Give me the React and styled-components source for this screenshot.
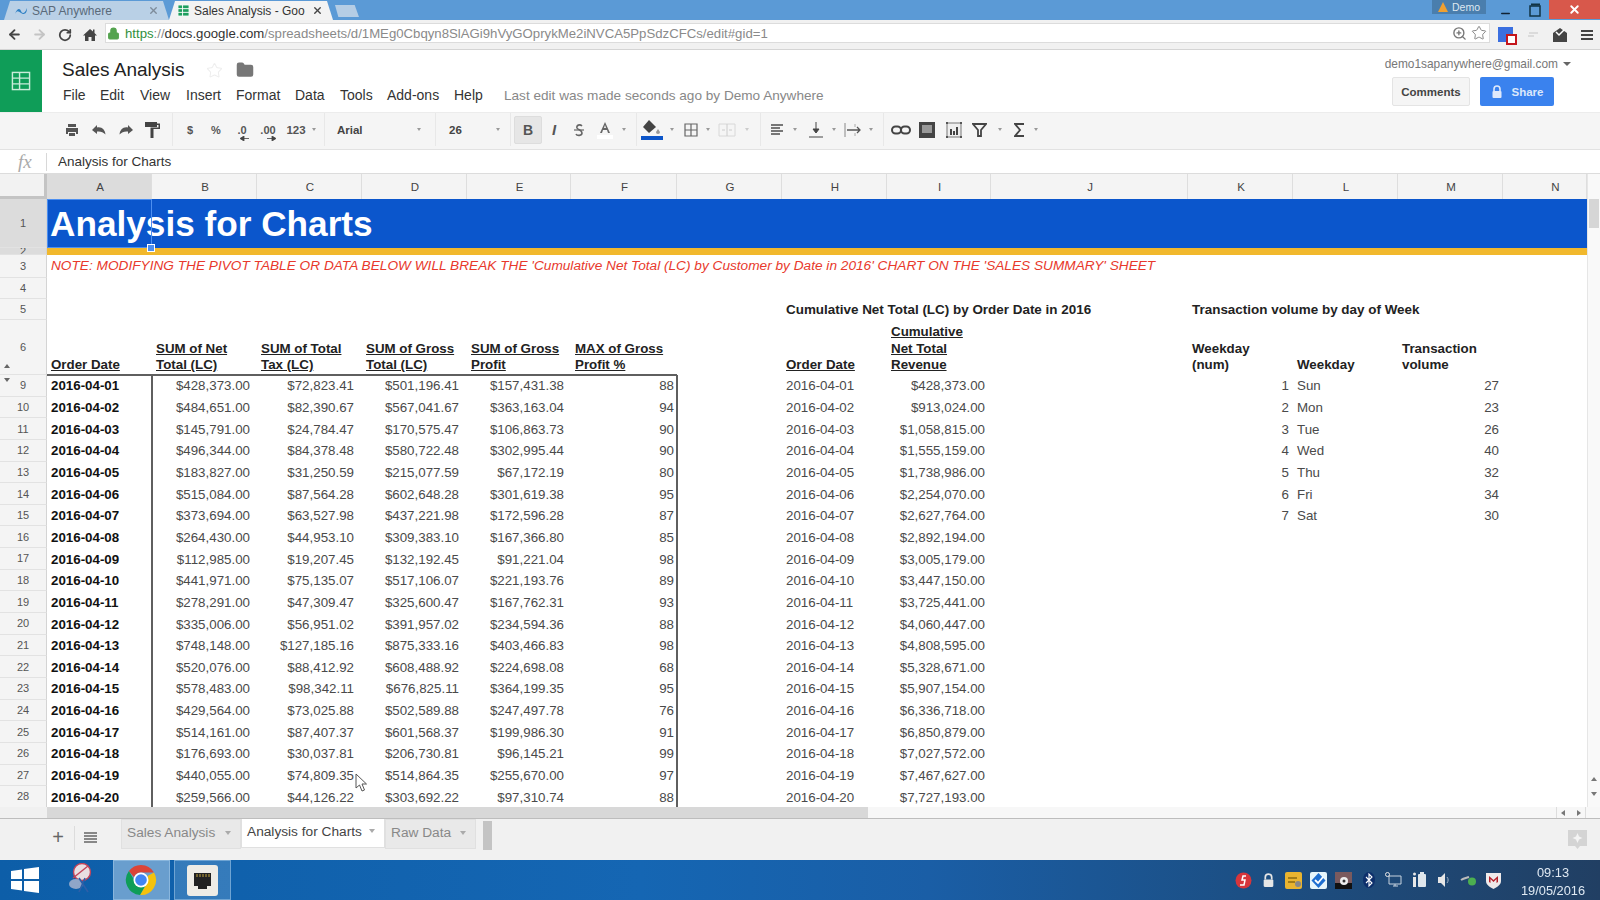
import React from "react";
import styled, { createGlobalStyle } from "styled-components";
import { ArrowLeft, ArrowRight, RotateCw, Lock, Star, ZoomIn, Folder, X, Minus } from "lucide-react";

const GlobalStyle = createGlobalStyle`
  html, body { margin: 0; padding: 0; height: 100%; overflow: hidden; background: #fff; }
  body { font-family: "Liberation Sans", Arial, sans-serif; }
  #root { height: 100%; }
`;

const Frame = styled.div`
  width: 1600px;
  height: 900px;
  display: flex;
  flex-direction: column;
  position: relative;
  overflow: hidden;
  filter: blur(0.5px);
`;

/* browser chrome */
const TabStrip = styled.div`
  height: 20px;
  flex: none;
  background: #5b9ad6;
  display: flex;
  align-items: flex-end;
  padding-left: 4px;
`;

const BrowserTab = styled.div`
  width: ${(p) => p.$w}px;
  height: 19px;
  padding: 0 10px 0 ${(p) => p.$pl}px;
  box-sizing: border-box;
  display: flex;
  align-items: center;
  gap: 4px;
  font-size: 12px;
  white-space: nowrap;
  overflow: hidden;
  color: ${(p) => (p.$active ? "#333" : "#5a6a7a")};
  background: ${(p) => (p.$active ? "#f3f3f3" : "#b9d0e6")};
  clip-path: polygon(0 100%, 6px 0, calc(100% - 6px) 0, 100% 100%);
`;

const TabTitle = styled.span`
  flex: 1;
`;

const NewTab = styled.div`
  width: 24px;
  height: 12px;
  margin-left: 2px;
  margin-bottom: 3px;
  background: #b5cde5;
  clip-path: polygon(0 0, 82% 0, 100% 100%, 14% 100%);
`;

const WindowControls = styled.div`
  margin-left: auto;
  display: flex;
  align-self: flex-start;
  height: 19px;
`;

const DemoBadge = styled.div`
  width: 54px;
  height: 14px;
  margin-right: 5px;
  background: #4a7ead;
  color: #dfe8f0;
  font-size: 10.5px;
  display: flex;
  align-items: center;
  justify-content: center;
  gap: 4px;
`;

const WinBtn = styled.div`
  width: 29px;
  display: flex;
  align-items: center;
  justify-content: center;
  color: #123;
`;

const MinimizeMark = styled(Minus)`
  margin-top: 8px;
`;

const CloseBtn = styled.div`
  width: 51px;
  background: #d8584b;
  color: #fff;
  display: flex;
  align-items: center;
  justify-content: center;
`;

const AddressBar = styled.div`
  height: 30px;
  flex: none;
  background: #f1f1f1;
  border-bottom: 1px solid #d4d4d4;
  box-sizing: border-box;
  display: flex;
  align-items: center;
  padding-left: 2px;
`;

const NavBtn = styled.div`
  width: 25px;
  display: flex;
  justify-content: center;
  color: ${(p) => p.$c || "#555"};
`;

const Omnibox = styled.div`
  width: 1385px;
  height: 20px;
  flex: none;
  margin-left: 3px;
  margin-top: -3px;
  background: #fff;
  border: 1px solid #dcdcdc;
  box-sizing: border-box;
  display: flex;
  align-items: center;
  padding: 0 2px 0 1px;
  font-size: 13.2px;
  color: #8a8a8a;
  white-space: nowrap;
`;

const LockMark = styled(Lock)`
  margin-right: 5px;
`;

const Scheme = styled.span`
  color: #2f8f3c;
`;

const Domain = styled.span`
  color: #333;
`;

const OmniEnd = styled.div`
  margin-left: auto;
  display: flex;
  align-items: center;
  gap: 4px;
  color: #777;
`;

const ExtIcons = styled.div`
  display: flex;
  align-items: center;
  margin-left: 2px;
`;

const ExtSlot = styled.div`
  width: 27px;
  flex: none;
  display: flex;
  justify-content: center;
  position: relative;
`;

const ExtBlue = styled.div`
  width: 15px;
  height: 15px;
  background: #3a6fe0;
`;

const ExtBadge = styled.div`
  position: absolute;
  right: 2px;
  bottom: -3px;
  width: 7px;
  height: 7px;
  background: #fff;
  border: 2px solid #c4161c;
`;

/* sheets header */
const DocHeader = styled.div`
  height: 62px;
  flex: none;
  display: flex;
  background: #fff;
`;

const Logo = styled.div`
  width: 42px;
  background: #0f9d58;
  display: flex;
  align-items: center;
  justify-content: center;
`;

const DocInfo = styled.div`
  flex: 1;
  padding: 8px 0 0 21px;
`;

const TitleRow = styled.div`
  display: flex;
  align-items: center;
  height: 24px;
`;

const DocTitle = styled.div`
  font-size: 19px;
  color: #222;
  width: 144px;
  margin-left: -1px;
`;

const TitleStar = styled(Star)`
  margin-right: 13px;
`;

const MenuRow = styled.div`
  display: flex;
  align-items: center;
  margin-top: 5px;
  font-size: 14px;
  color: #333;
`;

const MenuItem = styled.span`
  width: ${(p) => p.$w}px;
`;

const LastEdit = styled.span`
  margin-left: -1px;
  font-size: 13.6px;
  color: #888;
`;

const Account = styled.div`
  display: flex;
  flex-direction: column;
  align-items: flex-end;
  padding-right: 29px;
`;

const Email = styled.div`
  margin-top: 6px;
  font-size: 11.9px;
  color: #777;
  display: flex;
  align-items: center;
  gap: 4px;
  height: 15px;
`;

const AccountBtns = styled.div`
  display: flex;
  gap: 10px;
  margin-top: 6px;
  margin-right: 17px;
`;

const CommentsBtn = styled.div`
  width: 78px;
  height: 29px;
  box-sizing: border-box;
  border: 1px solid #e4e4e4;
  background: #f5f5f5;
  border-radius: 2px;
  font-size: 11.5px;
  font-weight: bold;
  color: #444;
  display: flex;
  align-items: center;
  justify-content: center;
`;

const ShareBtn = styled.div`
  width: 74px;
  height: 29px;
  background: #3a82ee;
  border-radius: 2px;
  font-size: 11.5px;
  font-weight: bold;
  color: #dbe8fb;
  display: flex;
  align-items: center;
  justify-content: center;
  gap: 9px;
`;

/* toolbar */
const Toolbar = styled.div`
  height: 38px;
  flex: none;
  box-sizing: border-box;
  display: flex;
  background: #f5f5f5;
  border-top: 1px solid #ececec;
  border-bottom: 1px solid #e2e2e2;
  padding-bottom: 3px;
`;

const ToolGroup = styled.div`
  width: ${(p) => p.$w}px;
  box-sizing: border-box;
  padding-left: ${(p) => p.$pl}px;
  display: flex;
  align-items: center;
  box-shadow: ${(p) => (p.$last ? "none" : "1px 0 0 #e8e8e8")};
`;

const ToolBtn = styled.div`
  width: ${(p) => p.$w || 27}px;
  height: ${(p) => (p.$on ? "28px" : "auto")};
  flex: none;
  display: flex;
  align-items: center;
  justify-content: center;
  font-size: ${(p) => p.$fs || 11}px;
  font-weight: bold;
  color: #555;
  background: ${(p) => (p.$on ? "#e6e6e6" : "transparent")};
  border: ${(p) => (p.$on ? "1px solid #ddd" : "none")};
  box-sizing: border-box;
  border-radius: 2px;
`;

const Caret = styled.span`
  width: ${(p) => p.$w || 12}px;
  flex: none;
  display: flex;
  justify-content: center;
  &::after {
    content: "";
    border-left: ${(p) => p.$s || 2.5}px solid transparent;
    border-right: ${(p) => p.$s || 2.5}px solid transparent;
    border-top: ${(p) => (p.$s ? p.$s + 0.5 : 3)}px solid ${(p) => p.$c || "#999"};
  }
`;

const SelectLike = styled.div`
  flex: 1;
  display: flex;
  justify-content: space-between;
  align-items: center;
  padding-right: ${(p) => p.$pr}px;
  font-size: 11.5px;
  font-weight: bold;
  color: #444;
`;

const Sub = styled.span`
  position: relative;
`;

const SubArrow = styled.span`
  position: absolute;
  left: ${(p) => p.$l}px;
  top: 12px;
  color: #444;
  display: flex;
`;

/* formula bar */
const FormulaBar = styled.div`
  height: 24px;
  flex: none;
  box-sizing: border-box;
  display: flex;
  align-items: center;
  background: #fff;
  border-bottom: 1px solid #dcdcdc;
  font-size: 13.5px;
  color: #333;
`;

const Fx = styled.div`
  width: 47px;
  height: 18px;
  box-sizing: border-box;
  padding-left: 18px;
  border-right: 1px solid #d8d8d8;
  font-family: "Liberation Serif", serif;
  font-style: italic;
  font-size: 19px;
  line-height: 18px;
  color: #aaa;
  margin-right: 11px;
`;

/* sheet */
const SheetArea = styled.div`
  flex: 1;
  display: flex;
  min-height: 0;
`;

const Sheet = styled.div`
  width: 1587px;
  background: #fff;
  overflow: hidden;
`;

const COLS = "47px 105px 105px 105px 105px 104px 106px 105px 105px 104px 197px 105px 105px 105px 84px";

const SheetRow = styled.div`
  display: grid;
  grid-template-columns: ${COLS};
  height: ${(p) => p.$h}px;
  background: ${(p) => p.$bg || "transparent"};
`;

const CornerCell = styled.div`
  background: #f2f2f2;
  border-right: 3px solid #c4c4c4;
  border-bottom: 3px solid #c4c4c4;
  box-sizing: border-box;
`;

const ColHead = styled.div`
  display: flex;
  align-items: center;
  justify-content: center;
  box-sizing: border-box;
  padding-left: ${(p) => p.$pl || 2}px;
  font-size: 11.5px;
  color: #444;
  background: ${(p) => (p.$on ? "#dcdcdc" : "#f4f4f4")};
  border-right: 1px solid #dedede;
`;

const RowHead = styled.div`
  position: relative;
  display: flex;
  align-items: center;
  justify-content: center;
  box-sizing: border-box;
  font-size: 11px;
  color: #555;
  overflow: hidden;
  background: ${(p) => (p.$on ? "#dcdcdc" : "#f4f4f4")};
  border-right: 1px solid #d4d4d4;
  border-bottom: 1px solid #e2e2e2;
`;

const Filter = styled.span`
  position: absolute;
  left: 4px;
  ${(p) => (p.$up ? "bottom: 6px; border-bottom: 4px solid #666;" : "top: 3px; border-top: 4px solid #666;")}
  border-left: 3.5px solid transparent;
  border-right: 3.5px solid transparent;
`;

const Cell = styled.div`
  position: relative;
  box-sizing: border-box;
  display: flex;
  grid-column: ${(p) => p.$col || "auto"};
  align-items: ${(p) => p.$v || "center"};
  justify-content: ${(p) => (p.$right ? "flex-end" : "flex-start")};
  padding: ${(p) => p.$pt || 0}px ${(p) => p.$pr ?? 4}px ${(p) => p.$pb || 0}px 4px;
  font-size: ${(p) => p.$fs || 13.33}px;
  line-height: 16.67px;
  white-space: nowrap;
  font-weight: ${(p) => (p.$bold ? "bold" : "normal")};
  color: ${(p) => p.$c || "#4a4a4a"};
  border-right: ${(p) => (p.$edge ? "2px solid #5f5f5f" : "none")};
  margin-right: ${(p) => (p.$edge ? "-1px" : "0")};
  border-bottom: ${(p) => (p.$floor ? "2px solid #5f5f5f" : "none")};
  margin-bottom: ${(p) => (p.$floor ? "-1px" : "0")};
`;

const Head = styled.span`
  text-decoration: ${(p) => (p.$plain ? "none" : "underline")};
  color: #222;
`;

const TitleCell = styled(Cell)`
  padding: 1px 0 0 3px;
  font-size: 35.2px;
  font-weight: bold;
  color: #fff;
  margin: 0;
  outline: 1px solid #4d8ff0;
  outline-offset: -1px;
  z-index: 2;
`;

const FillHandle = styled.span`
  position: absolute;
  right: -3px;
  bottom: -4px;
  width: 6px;
  height: 6px;
  background: #4d8ff0;
  border: 1px solid #fff;
`;

const Note = styled(Cell)`
  font-size: 13.67px;
  font-style: italic;
  color: #e8392c;
`;

const VScroll = styled.div`
  width: 13px;
  background: #f9f9f9;
  border-left: 1px solid #e6e6e6;
  box-sizing: border-box;
  display: flex;
  flex-direction: column;
  align-items: center;
  padding-top: 25px;
`;

const VThumb = styled.div`
  width: 10px;
  height: 29px;
  background: #d6d6d6;
`;

const VArrows = styled.div`
  margin-top: auto;
  margin-bottom: 11px;
  display: flex;
  flex-direction: column;
  gap: 11px;
  align-items: center;
`;

const TriUp = styled.span`
  border-left: 3px solid transparent;
  border-right: 3px solid transparent;
  border-bottom: 4px solid #777;
`;

const TriDown = styled(TriUp)`
  border-bottom: none;
  border-top: 4px solid #777;
`;

const TriLeft = styled.span`
  border-top: 3px solid transparent;
  border-bottom: 3px solid transparent;
  border-right: 4px solid #777;
`;

const TriRight = styled(TriLeft)`
  border-right: none;
  border-left: 4px solid #777;
`;

const HScroll = styled.div`
  height: 11px;
  flex: none;
  display: flex;
  background: #f7f7f7;
  border-bottom: 1px solid #bdbdbd;
  box-sizing: content-box;
`;

const HGutter = styled.div`
  width: 47px;
  background: #f0f0f0;
`;

const HThumb = styled.div`
  width: 821px;
  background: #d8d8d8;
`;

const HArrows = styled.div`
  margin-left: auto;
  margin-right: 14px;
  display: flex;
  align-items: center;
  gap: 12px;
  padding: 0 4px;
  border-left: 1px solid #ddd;
  border-right: 1px solid #ddd;
`;

/* sheet tabs */
const TabsBar = styled.div`
  height: 41px;
  flex: none;
  display: flex;
  align-items: flex-start;
  background: #f1f1f1;
`;

const AddSheet = styled.div`
  width: 32px;
  margin: 7px 0 0 42px;
  height: 24px;
  font-size: 20px;
  line-height: 22px;
  color: #666;
  text-align: center;
`;

const AllSheets = styled.div`
  width: 30px;
  height: 24px;
  margin: 7px 16px 0 0;
  border-left: 1px solid #dcdcdc;
  display: flex;
  align-items: center;
  justify-content: center;
  color: #666;
`;

const SheetTab = styled.div`
  width: ${(p) => p.$w}px;
  height: ${(p) => (p.$on ? 29 : 30)}px;
  box-sizing: border-box;
  padding: 0 8px ${(p) => (p.$on ? 4 : 3)}px 5px;
  display: flex;
  align-items: center;
  justify-content: space-between;
  font-size: 13.7px;
  white-space: nowrap;
  color: ${(p) => (p.$on ? "#444" : "#888")};
  background: ${(p) => (p.$on ? "#fff" : "#e9e9e9")};
  border: 1px solid #e0e0e0;
  border-top: ${(p) => (p.$on ? "none" : "1px solid #e0e0e0")};
`;

const TabGrip = styled.div`
  width: 9px;
  height: 29px;
  margin: 2px 0 0 7px;
  background: #c4c4c4;
`;

const Explore = styled.div`
  margin: 11px 13px 0 auto;
  display: flex;
`;

/* windows taskbar */
const Taskbar = styled.div`
  height: 40px;
  flex: none;
  display: flex;
  align-items: center;
  background: linear-gradient(90deg, #0d5ea8 0%, #1566b3 40%, #1a5ea6 58%, #1c4f84 78%, #213f63 100%);
`;

const StartBtn = styled.div`
  width: 50px;
  display: flex;
  justify-content: center;
`;

const SnipBtn = styled.div`
  width: 62.5px;
  display: flex;
  justify-content: center;
`;

const TaskApp = styled.div`
  width: 57px;
  height: 40px;
  margin-right: 4px;
  box-sizing: border-box;
  display: flex;
  align-items: center;
  justify-content: center;
  background: ${(p) => (p.$on ? "rgba(180,210,235,.55)" : "rgba(150,190,225,.28)")};
  border: 1px solid rgba(170, 205, 235, 0.5);
`;

const Tray = styled.div`
  margin-left: auto;
  display: flex;
  align-items: center;
`;

const TraySlot = styled.div`
  width: 25px;
  display: flex;
  justify-content: center;
`;

const Clock = styled.div`
  width: 94px;
  padding-top: 3px;
  text-align: center;
  font-size: 12.8px;
  line-height: 18px;
  color: #dfe9f3;
`;

const Pointer = styled.svg`
  position: absolute;
  left: 355px;
  top: 773px;
  z-index: 5;
`;

/* small drawings */
const Ico = ({ w = 16, h = 16, children, ...rest }) => (
  <svg width={w} height={h} viewBox={`0 0 ${w} ${h}`} {...rest}>
    {children}
  </svg>
);

const SheetGlyph = ({ size = 14, line = "#fff", fill = "none" }) => (
  <svg width={size} height={size} viewBox="0 0 14 14">
    <rect x="1" y="1" width="12" height="12" fill={fill} stroke={line} />
    <path d="M1 5h12M1 9h12M6 1v12" stroke={line} fill="none" />
  </svg>
);

const SapIcon = () => (
  <Ico w={14} h={10}>
    <path d="M1 8C3 2 6 2 7 5s4 3 6-3c0 6-3 7-6 5S3 4 1 8z" fill="#2c7fc4" />
  </Ico>
);

const HomeIcon = () => (
  <Ico w={14} h={14}>
    <path d="M7 1L0 7.500h2V13h3.500V9h3v4H12V7.500h2L11.500 5V1.500H10v2z" fill="#444" />
  </Ico>
);

const PrintIcon = () => (
  <Ico>
    <path d="M4 2h8v3H4z" fill="#555" />
    <path d="M2 6h12v6h-2v-2H4v2H2z" fill="#555" />
    <path d="M5 11h6v3H5z" fill="#555" />
  </Ico>
);

const UndoIcon = ({ flip }) => (
  <svg width="16" height="14" viewBox="0 0 16 14" transform={flip ? "scale(-1 1)" : undefined}>
    <path d="M6 2L1 7l5 4V8.500c3.500-.5 6 .5 8.500 3C14 7 11 3.500 6 4.500z" fill="#555" />
  </svg>
);

const PaintIcon = () => (
  <Ico w={15} h={18}>
    <path d="M0 1h12v1.500h3V8H8.500v9h-3V6.500h8V4H12v2H0z" fill="#444" />
  </Ico>
);

const StrikeIcon = () => (
  <Ico w={12} h={14}>
    <path d="M9 3C7 1 3 2 4 5c1 2 5 2 5 5 0 3-5 3-6 1" stroke="#666" strokeWidth="1.6" fill="none" />
    <path d="M1 7h10" stroke="#666" strokeWidth="1.2" />
  </Ico>
);

const TextColorIcon = () => (
  <Ico w={18} h={20}>
    <path d="M9 2L4 13h2l1-3h4l1 3h2zM8 8l1-3 1 3z" fill="#666" fillRule="evenodd" />
    <rect x="1" y="15" width="16" height="4" fill="#fff" />
  </Ico>
);

const FillIcon = () => (
  <Ico w={24} h={24}>
    <path d="M9 2l-6 7 6 6 7-6z" fill="#444" />
    <path d="M18 11l2 3a2 2 0 1 1-4 0z" fill="#999" />
    <rect x="1" y="18" width="22" height="4" fill="#0b55c9" />
  </Ico>
);

const BordersIcon = ({ c = "#666" }) => (
  <Ico w={14} h={14}>
    <path d="M1 1h12v12H1zM7 1v12M1 7h12" stroke={c} fill="none" strokeWidth="1.2" />
  </Ico>
);

const MergeIcon = () => (
  <Ico w={18} h={14}>
    <path d="M1 1h16v12H1z" stroke="#d8d8d8" fill="none" />
    <path d="M4 7h3M14 7h-3M9 1v12" stroke="#ccc" fill="none" />
  </Ico>
);

const AlignIcon = () => (
  <Ico w={14} h={14}>
    <path d="M1 2h12M1 5h9M1 8h12M1 11h9" stroke="#777" strokeWidth="1.8" />
  </Ico>
);

const ValignIcon = () => (
  <Ico w={16} h={18}>
    <path d="M8 1v9M5 8l3 4 3-4z" stroke="#444" fill="#444" />
    <path d="M1 16h14" stroke="#777" strokeWidth="1.4" />
  </Ico>
);

const WrapIcon = () => (
  <Ico w={18} h={16}>
    <path d="M1 1v14" stroke="#888" />
    <path d="M3 8h13M13 5l3 3-3 3" stroke="#555" fill="none" strokeWidth="1.3" />
    <path d="M11 2v3M11 11v3" stroke="#aaa" />
  </Ico>
);

const LinkIcon = () => (
  <Ico w={20} h={10}>
    <rect x="1" y="1.500" width="9" height="7" rx="3.500" stroke="#444" strokeWidth="2" fill="none" />
    <rect x="10" y="1.500" width="9" height="7" rx="3.500" stroke="#444" strokeWidth="2" fill="none" />
  </Ico>
);

const CommentIcon = () => (
  <Ico w={16} h={16}>
    <rect x="0" y="0" width="16" height="16" fill="#444" />
    <rect x="3" y="3" width="10" height="8" fill="#999" />
  </Ico>
);

const ChartIcon = () => (
  <Ico w={18} h={18}>
    <rect x="2" y="2" width="14" height="14" stroke="#777" fill="#eee" />
    <path d="M1 1h2v2H1zM15 1h2v2h-2zM1 15h2v2H1zM15 15h2v2h-2z" fill="#555" />
    <path d="M5 8h2v6H5zM8 10h2v4H8zM11 6h2v8h-2z" fill="#444" />
  </Ico>
);

const FilterIcon = () => (
  <Ico w={15} h={14}>
    <path d="M1 1h13L9 7v6H6V7z" fill="none" stroke="#444" strokeWidth="1.8" />
  </Ico>
);

const SigmaIcon = () => (
  <Ico w={11} h={14}>
    <path d="M10 1H1l5 6-5 6h9" fill="none" stroke="#444" strokeWidth="1.8" />
  </Ico>
);

const SmallArrow = ({ flip }) => (
  <svg width="9" height="5" viewBox="0 0 9 5" transform={flip ? "scale(-1 1)" : undefined}>
    <path d="M0 2.500h6M5 0l4 2.500L5 5z" stroke="#444" fill="#444" strokeWidth="0.8" />
  </svg>
);

const LockGlyph = ({ c = "#dfe9fb", w = 12, h = 14 }) => (
  <svg width={w} height={h} viewBox="0 0 12 14">
    <path d="M3 6V4a3 3 0 0 1 6 0v2" stroke={c} strokeWidth="1.6" fill="none" />
    <rect x="1.500" y="6" width="9" height="7" rx="1" fill={c} />
  </svg>
);

const MailIcon = () => (
  <Ico w={16} h={16}>
    <path d="M1 6l7-5 7 5v9H1z" fill="#444" />
    <path d="M4 5l3 3 5-5" stroke="#fff" strokeWidth="1.5" fill="none" />
  </Ico>
);

const Burger = () => (
  <Ico w={12} h={12}>
    <path d="M0 2h12M0 6h12M0 10h12" stroke="#444" strokeWidth="2" />
  </Ico>
);

const WinLogo = () => (
  <Ico w={28} h={26}>
    <path d="M0 4l11-1.600V12H0zM13 2.100L28 0v12H13zM0 14h11v9.600L0 22zM13 14h15v12l-15-2.100z" fill="#fff" />
  </Ico>
);

const SnipIcon = () => (
  <Ico w={28} h={34}>
    <circle cx="15" cy="9" r="8.500" fill="#e9dfe2" stroke="#c2445a" strokeWidth="1.4" />
    <path d="M6 15L21 3" stroke="#c2445a" strokeWidth="1.4" />
    <ellipse cx="9" cy="21" rx="7" ry="5" fill="#8fa6c8" />
    <path d="M12 15l9 14M18 15l-6 14" stroke="#2e5fa8" strokeWidth="1.6" />
  </Ico>
);

const ChromeIcon = () => (
  <svg width="32" height="32" viewBox="0 0 32 32">
    <path d="M16 1a15 15 0 0 1 13 7.500H16a7.500 7.500 0 0 0-7 4.700L3.900 7A15 15 0 0 1 16 1z" fill="#db4437" />
    <path d="M29 8.500A15 15 0 0 1 15 31l6.500-11.200A7.500 7.500 0 0 0 22.500 12z" fill="#f4c20d" />
    <path d="M3.900 7l6.600 11.300a7.500 7.500 0 0 0 9.500 4L15 31A15 15 0 0 1 3.900 7z" fill="#0f9d58" />
    <circle cx="16" cy="16" r="7.500" fill="#fff" />
    <circle cx="16" cy="16" r="5.800" fill="#4285f4" />
  </svg>
);

const JackIcon = () => (
  <Ico w={33} h={33}>
    <rect x="1" y="1" width="31" height="31" rx="3" fill="#eeece6" />
    <path d="M8 9h17v13h-4v3h-9v-3H8z" fill="#222" />
    <path d="M11 10v3M14 10v3M17 10v3M20 10v3M23 10v3" stroke="#c2a33a" />
  </Ico>
);

const trayIcons = [
  <Ico key="f5" w={17} h={17}>
    <circle cx="8.500" cy="8.500" r="8" fill="#d8353b" />
    <path d="M11 4H8L7 8h3l-1 5H5" stroke="#fff" strokeWidth="1.500" fill="none" />
  </Ico>,
  <LockGlyph key="lock" c="#e6e6e6" w={13} h={15} />,
  <Ico key="yellow" w={17} h={17}>
    <rect width="17" height="17" rx="2" fill="#e9b430" />
    <path d="M3 6h9M3 10h7" stroke="#8a6a10" strokeWidth="1.500" />
    <circle cx="13" cy="12" r="3" fill="#888" />
  </Ico>,
  <Ico key="check" w={17} h={17}>
    <rect width="17" height="17" rx="2" fill="#e8f6fb" />
    <path d="M8.500 1l7 7.500-7 7.500-7-7.500z" fill="#1f6fd0" />
    <path d="M5 8l3 3 5-6" stroke="#fff" strokeWidth="1.800" fill="none" />
  </Ico>,
  <Ico key="dark" w={17} h={17}>
    <rect width="17" height="17" fill="#7a5a5e" />
    <rect y="11" width="17" height="6" fill="#111" />
    <circle cx="9" cy="9" r="4" fill="#eee" />
    <circle cx="9" cy="9" r="1.500" fill="#333" />
  </Ico>,
  <Ico key="bt" w={12} h={16}>
    <ellipse cx="6" cy="8" rx="6" ry="8" fill="#0d2f6b" />
    <path d="M3 5l6 6-3 3V2l3 3-6 6" stroke="#fff" strokeWidth="1.100" fill="none" />
  </Ico>,
  <Ico key="net" w={17} h={16}>
    <path d="M4 4h12v8H4zM8 14h5M10 12v2" stroke="#c7d3df" fill="none" />
    <circle cx="2.500" cy="2.500" r="2" fill="none" stroke="#e6e6e6" />
  </Ico>,
  <Ico key="bat" w={16} h={16}>
    <rect x="7" y="2" width="8" height="13" rx="1" fill="#dfe6ec" />
    <rect x="9" y="0" width="4" height="2" fill="#dfe6ec" />
    <path d="M2 5h3v10H2z" fill="#e8e8e8" />
    <circle cx="3.500" cy="2" r="1.500" fill="#e8e8e8" />
  </Ico>,
  <Ico key="vol" w={14} h={16}>
    <path d="M1 5h3l4-4v14l-4-4H1z" fill="#e6e6e6" />
    <path d="M10 5c1.500 2 1.500 4 0 6" stroke="#9fb2c4" fill="none" />
  </Ico>,
  <Ico key="wifi" w={17} h={12}>
    <path d="M1 6c3-2 5-2 8-3" stroke="#bbb" strokeWidth="2" fill="none" />
    <circle cx="12" cy="7.500" r="4" fill="#4caf50" />
  </Ico>,
  <Ico key="mc" w={17} h={17}>
    <path d="M1 1h15v8c0 4-4 6-7.500 8C5 15 1 13 1 9z" fill="#eeeaea" />
    <path d="M4 10V4l4.500 4L13 4v6l-1.500 1V7L8.500 10 5.500 7v4z" fill="#b5202a" />
  </Ico>,
];

const rows = [
  [9, "2016-04-01", "$428,373.00", "$72,823.41", "$501,196.41", "$157,431.38", 88, "$428,373.00"],
  [10, "2016-04-02", "$484,651.00", "$82,390.67", "$567,041.67", "$363,163.04", 94, "$913,024.00"],
  [11, "2016-04-03", "$145,791.00", "$24,784.47", "$170,575.47", "$106,863.73", 90, "$1,058,815.00"],
  [12, "2016-04-04", "$496,344.00", "$84,378.48", "$580,722.48", "$302,995.44", 90, "$1,555,159.00"],
  [13, "2016-04-05", "$183,827.00", "$31,250.59", "$215,077.59", "$67,172.19", 80, "$1,738,986.00"],
  [14, "2016-04-06", "$515,084.00", "$87,564.28", "$602,648.28", "$301,619.38", 95, "$2,254,070.00"],
  [15, "2016-04-07", "$373,694.00", "$63,527.98", "$437,221.98", "$172,596.28", 87, "$2,627,764.00"],
  [16, "2016-04-08", "$264,430.00", "$44,953.10", "$309,383.10", "$167,366.80", 85, "$2,892,194.00"],
  [17, "2016-04-09", "$112,985.00", "$19,207.45", "$132,192.45", "$91,221.04", 98, "$3,005,179.00"],
  [18, "2016-04-10", "$441,971.00", "$75,135.07", "$517,106.07", "$221,193.76", 89, "$3,447,150.00"],
  [19, "2016-04-11", "$278,291.00", "$47,309.47", "$325,600.47", "$167,762.31", 93, "$3,725,441.00"],
  [20, "2016-04-12", "$335,006.00", "$56,951.02", "$391,957.02", "$234,594.36", 88, "$4,060,447.00"],
  [21, "2016-04-13", "$748,148.00", "$127,185.16", "$875,333.16", "$403,466.83", 98, "$4,808,595.00"],
  [22, "2016-04-14", "$520,076.00", "$88,412.92", "$608,488.92", "$224,698.08", 68, "$5,328,671.00"],
  [23, "2016-04-15", "$578,483.00", "$98,342.11", "$676,825.11", "$364,199.35", 95, "$5,907,154.00"],
  [24, "2016-04-16", "$429,564.00", "$73,025.88", "$502,589.88", "$247,497.78", 76, "$6,336,718.00"],
  [25, "2016-04-17", "$514,161.00", "$87,407.37", "$601,568.37", "$199,986.30", 91, "$6,850,879.00"],
  [26, "2016-04-18", "$176,693.00", "$30,037.81", "$206,730.81", "$96,145.21", 99, "$7,027,572.00"],
  [27, "2016-04-19", "$440,055.00", "$74,809.35", "$514,864.35", "$255,670.00", 97, "$7,467,627.00"],
  [28, "2016-04-20", "$259,566.00", "$44,126.22", "$303,692.22", "$97,310.74", 88, "$7,727,193.00"],
];

const weekdays = [
  [1, "Sun", 27],
  [2, "Mon", 23],
  [3, "Tue", 26],
  [4, "Wed", 40],
  [5, "Thu", 32],
  [6, "Fri", 34],
  [7, "Sat", 30],
];

const menu = [
  ["File", 37],
  ["Edit", 40],
  ["View", 46],
  ["Insert", 50],
  ["Format", 59],
  ["Data", 45],
  ["Tools", 47],
  ["Add-ons", 67],
  ["Help", 51],
];

const colLetters = "ABCDEFGHIJKLMN".split("");

const App = () => {
  return (
    <Frame>
      <GlobalStyle />
      <TabStrip>
        <BrowserTab $w={165} $pl={10}>
          <SapIcon />
          <TabTitle>SAP Anywhere</TabTitle>
          <X size={11} color="#7d8c9b" strokeWidth={3} />
        </BrowserTab>
        <BrowserTab $w={164} $pl={8} $active>
          <SheetGlyph size={13} line="#fff" fill="#1e9e5e" />
          <TabTitle>Sales Analysis - Goo</TabTitle>
          <X size={11} color="#444" strokeWidth={3} />
        </BrowserTab>
        <NewTab />
        <WindowControls>
          <DemoBadge>
            <Ico w={10} h={10}>
              <path d="M5 0l5 10H0z" fill="#f0a030" />
            </Ico>
            Demo
          </DemoBadge>
          <WinBtn>
            <MinimizeMark size={13} strokeWidth={2.5} />
          </WinBtn>
          <WinBtn>
            <Ico w={12} h={14}>
              <rect x="1" y="3" width="10" height="10" fill="none" stroke="#134" strokeWidth="1.500" />
              <path d="M2 1.500h9" stroke="#134" strokeWidth="2" />
            </Ico>
          </WinBtn>
          <CloseBtn>
            <X size={13} strokeWidth={3.5} />
          </CloseBtn>
        </WindowControls>
      </TabStrip>

      <AddressBar>
        <NavBtn $c="#444">
          <ArrowLeft size={15} strokeWidth={3} />
        </NavBtn>
        <NavBtn $c="#c4c4c4">
          <ArrowRight size={15} strokeWidth={3} />
        </NavBtn>
        <NavBtn $c="#444">
          <RotateCw size={14} strokeWidth={3} />
        </NavBtn>
        <NavBtn $c="#444">
          <HomeIcon />
        </NavBtn>
        <Omnibox>
          <LockMark size={13} color="#54a34f" fill="#54a34f" />
          <Scheme>https</Scheme>://<Domain>docs.google.com</Domain>
          /spreadsheets/d/1MEg0Cbqyn8SlAGi9hVyGOprykMe2iNVCA5PpSdzCFCs/edit#gid=1
          <OmniEnd>
            <ZoomIn size={15} strokeWidth={2.2} />
            <Star size={16} strokeWidth={1.5} color="#888" />
          </OmniEnd>
        </Omnibox>
        <ExtIcons>
          <ExtSlot>
            <ExtBlue />
            <ExtBadge />
          </ExtSlot>
          <ExtSlot>
            <Ico w={12} h={10}>
              <path d="M2 3h9M1 6h6" stroke="#d4d4d4" strokeWidth="1.500" />
            </Ico>
          </ExtSlot>
          <ExtSlot>
            <MailIcon />
          </ExtSlot>
          <ExtSlot>
            <Burger />
          </ExtSlot>
        </ExtIcons>
      </AddressBar>

      <DocHeader>
        <Logo>
          <SheetGlyph size={20} line="#c9ecd9" />
        </Logo>
        <DocInfo>
          <TitleRow>
            <DocTitle>Sales Analysis</DocTitle>
            <TitleStar size={17} color="#eee" strokeWidth={1.5} />
            <Folder size={18} color="#777" fill="#777" />
          </TitleRow>
          <MenuRow>
            {menu.map(([label, w]) => (
              <MenuItem key={label} $w={w}>
                {label}
              </MenuItem>
            ))}
            <LastEdit>Last edit was made seconds ago by Demo Anywhere</LastEdit>
          </MenuRow>
        </DocInfo>
        <Account>
          <Email>
            demo1sapanywhere@gmail.com
            <Caret $w={9} $s={4} $c="#666" />
          </Email>
          <AccountBtns>
            <CommentsBtn>Comments</CommentsBtn>
            <ShareBtn>
              <LockGlyph />
              Share
            </ShareBtn>
          </AccountBtns>
        </Account>
      </DocHeader>

      <Toolbar>
        <ToolGroup $w={172} $pl={58}>
          <ToolBtn><PrintIcon /></ToolBtn>
          <ToolBtn><UndoIcon /></ToolBtn>
          <ToolBtn><UndoIcon flip /></ToolBtn>
          <ToolBtn><PaintIcon /></ToolBtn>
        </ToolGroup>
        <ToolGroup $w={152} $pl={5}>
          <ToolBtn $w={26}>$</ToolBtn>
          <ToolBtn $w={26}>%</ToolBtn>
          <ToolBtn $w={26}>
            <Sub>
              .0
              <SubArrow $l={3}><SmallArrow flip /></SubArrow>
            </Sub>
          </ToolBtn>
          <ToolBtn $w={26}>
            <Sub>
              .00
              <SubArrow $l={7}><SmallArrow /></SubArrow>
            </Sub>
          </ToolBtn>
          <ToolBtn $w={30} $fs={11.5}>123</ToolBtn>
          <Caret $w={5} />
        </ToolGroup>
        <ToolGroup $w={111} $pl={13}>
          <SelectLike $pr={14}>
            Arial
            <Caret $w={5} />
          </SelectLike>
        </ToolGroup>
        <ToolGroup $w={75} $pl={14}>
          <SelectLike $pr={10}>
            26
            <Caret $w={5} />
          </SelectLike>
        </ToolGroup>
        <ToolGroup $w={126} $pl={4}>
          <ToolBtn $w={28} $on $fs={14}>B</ToolBtn>
          <ToolBtn $w={24} $fs={15}><i>I</i></ToolBtn>
          <ToolBtn $w={26}><StrikeIcon /></ToolBtn>
          <ToolBtn $w={26}><TextColorIcon /></ToolBtn>
          <Caret />
        </ToolGroup>
        <ToolGroup $w={124} $pl={4}>
          <ToolBtn $w={24}><FillIcon /></ToolBtn>
          <Caret $w={16} />
          <ToolBtn $w={22}><BordersIcon /></ToolBtn>
          <Caret />
          <ToolBtn $w={26}><MergeIcon /></ToolBtn>
          <Caret $w={14} $c="#ccc" />
        </ToolGroup>
        <ToolGroup $w={123} $pl={6}>
          <ToolBtn $w={22}><AlignIcon /></ToolBtn>
          <Caret $w={14} />
          <ToolBtn $w={28}><ValignIcon /></ToolBtn>
          <Caret $w={8} />
          <ToolBtn $w={30}><WrapIcon /></ToolBtn>
          <Caret $w={6} />
        </ToolGroup>
        <ToolGroup $w={300} $pl={6} $last>
          <ToolBtn $w={24}><LinkIcon /></ToolBtn>
          <ToolBtn $w={28}><CommentIcon /></ToolBtn>
          <ToolBtn $w={26}><ChartIcon /></ToolBtn>
          <ToolBtn $w={24}><FilterIcon /></ToolBtn>
          <Caret $w={18} />
          <ToolBtn $w={20}><SigmaIcon /></ToolBtn>
          <Caret $w={14} />
        </ToolGroup>
      </Toolbar>

      <FormulaBar>
        <Fx>fx</Fx>
        Analysis for Charts
      </FormulaBar>

      <SheetArea>
        <Sheet>
          <SheetRow $h={25}>
            <CornerCell />
            {colLetters.map((c) => (
              <ColHead key={c} $on={c === "A"} $pl={c === "N" ? 22 : 2}>
                {c}
              </ColHead>
            ))}
          </SheetRow>

          <SheetRow $h={49} $bg="#0b56cc">
            <RowHead $on>1</RowHead>
            <TitleCell>
              Analysis for Charts
              <FillHandle />
            </TitleCell>
          </SheetRow>
          <SheetRow $h={7} $bg="#f1b82d">
            <RowHead $on>2</RowHead>
          </SheetRow>
          <SheetRow $h={23}>
            <RowHead>3</RowHead>
            <Note>
              NOTE: MODIFYING THE PIVOT TABLE OR DATA BELOW WILL BREAK THE 'Cumulative Net Total (LC) by Customer by Date in 2016' CHART ON THE 'SALES SUMMARY' SHEET
            </Note>
          </SheetRow>
          <SheetRow $h={21}>
            <RowHead>4</RowHead>
          </SheetRow>
          <SheetRow $h={21}>
            <RowHead>5</RowHead>
            <Cell $col={9} $bold $c="#222" $fs={13.45} $pt={1}>
              Cumulative Net Total (LC) by Order Date in 2016
            </Cell>
            <Cell $col={12} $bold $c="#222" $fs={13.45} $pt={1}>
              Transaction volume by day of Week
            </Cell>
          </SheetRow>
          <SheetRow $h={55}>
            <RowHead>
              6<Filter $up />
            </RowHead>
            <Cell $v="flex-end" $bold $floor><Head>Order Date</Head></Cell>
            <Cell $v="flex-end" $bold $floor><Head>SUM of Net<br />Total (LC)</Head></Cell>
            <Cell $v="flex-end" $bold $floor><Head>SUM of Total<br />Tax (LC)</Head></Cell>
            <Cell $v="flex-end" $bold $floor><Head>SUM of Gross<br />Total (LC)</Head></Cell>
            <Cell $v="flex-end" $bold $floor><Head>SUM of Gross<br />Profit</Head></Cell>
            <Cell $v="flex-end" $bold $floor><Head>MAX of Gross<br />Profit %</Head></Cell>
            <Cell />
            <Cell $v="flex-end" $bold $pb={1}><Head>Order Date</Head></Cell>
            <Cell $v="flex-end" $bold $pb={1}><Head>Cumulative<br />Net Total<br />Revenue</Head></Cell>
            <Cell />
            <Cell $v="flex-end" $bold $pb={1}><Head $plain>Weekday<br />(num)</Head></Cell>
            <Cell $v="flex-end" $bold $pb={1}><Head $plain>Weekday</Head></Cell>
            <Cell $v="flex-end" $bold $pb={1}><Head $plain>Transaction<br />volume</Head></Cell>
          </SheetRow>

          {rows.map(([num, date, net, tax, gross, profit, margin, cumulative], i) => (
            <SheetRow key={num} $h={21.65}>
              <RowHead>
                {num}
                {i === 0 && <Filter />}
              </RowHead>
              <Cell $bold $c="#111" $pt={2} $edge>{date}</Cell>
              <Cell $right $pr={7} $pt={2}>{net}</Cell>
              <Cell $right $pr={8} $pt={2}>{tax}</Cell>
              <Cell $right $pr={8} $pt={2}>{gross}</Cell>
              <Cell $right $pr={7} $pt={2}>{profit}</Cell>
              <Cell $right $edge $pr={2} $pt={2}>{margin}</Cell>
              <Cell />
              <Cell $pt={2}>{date}</Cell>
              <Cell $right $pr={6} $pt={2}>{cumulative}</Cell>
              <Cell />
              {weekdays[i] ? (
                <>
                  <Cell $right $pt={2}>{weekdays[i][0]}</Cell>
                  <Cell $pt={2}>{weekdays[i][1]}</Cell>
                  <Cell $right $pt={2}>{weekdays[i][2]}</Cell>
                </>
              ) : null}
            </SheetRow>
          ))}
        </Sheet>
        <VScroll>
          <VThumb />
          <VArrows>
            <TriUp />
            <TriDown />
          </VArrows>
        </VScroll>
      </SheetArea>

      <HScroll>
        <HGutter />
        <HThumb />
        <HArrows>
          <TriLeft />
          <TriRight />
        </HArrows>
      </HScroll>

      <TabsBar>
        <AddSheet>+</AddSheet>
        <AllSheets>
          <Ico w={13} h={12}>
            <path d="M0 1h13M0 4h13M0 7h13M0 10h13" stroke="#666" strokeWidth="1.500" />
          </Ico>
        </AllSheets>
        <SheetTab $w={120}>
          Sales Analysis
          <Caret $w={9} $s={3.5} $c="#aaa" />
        </SheetTab>
        <SheetTab $w={144} $on>
          Analysis for Charts
          <Caret $w={9} $s={3.5} $c="#aaa" />
        </SheetTab>
        <SheetTab $w={91}>
          Raw Data
          <Caret $w={9} $s={3.5} $c="#aaa" />
        </SheetTab>
        <TabGrip />
        <Explore>
          <Ico w={19} h={20}>
            <path d="M0 0h19v16h-7l-2.500 3L7 16H0z" fill="#d4d4d4" />
            <path d="M9.500 3l1.500 3.500L14.500 8 11 9.500 9.500 13 8 9.500 4.500 8 8 6.500z" fill="#f4f4f4" />
          </Ico>
        </Explore>
      </TabsBar>

      <Taskbar>
        <StartBtn>
          <WinLogo />
        </StartBtn>
        <SnipBtn>
          <SnipIcon />
        </SnipBtn>
        <TaskApp $on>
          <ChromeIcon />
        </TaskApp>
        <TaskApp>
          <JackIcon />
        </TaskApp>
        <Tray>
          {trayIcons.map((icon) => (
            <TraySlot key={icon.key}>{icon}</TraySlot>
          ))}
          <Clock>
            09:13
            <br />
            19/05/2016
          </Clock>
        </Tray>
      </Taskbar>

      <Pointer width="13" height="19" viewBox="0 0 13 19">
        <path d="M1 1v14l3.500-3 2.500 6 2.500-1-2.500-6h4.500z" fill="#fff" stroke="#555" strokeWidth="1" />
      </Pointer>
    </Frame>
  );
};

export default App;
